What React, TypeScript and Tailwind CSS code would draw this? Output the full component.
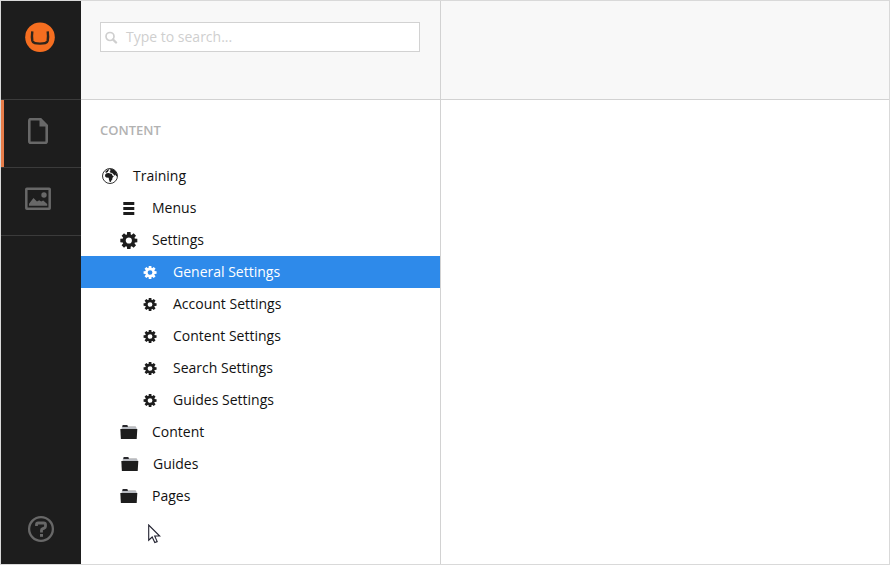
import React from "react";

type IconKind = "globe" | "menu" | "gear" | "gearSmall" | "folder";

function Gear({ size, viewBox }: { size: number; viewBox: string }) {
  return (
    <svg width={size} height={size} viewBox={viewBox} fill="currentColor" className="overflow-visible">
      {[0, 45, 90, 135].map((a) => (
        <path key={a} d="M6.400 0h3.200l.4 4H6zM6.400 16h3.200l.4-4H6z" transform={`rotate(${a} 8 8)`} />
      ))}
      <circle cx="8" cy="8" r="4.400" fill="none" stroke="currentColor" strokeWidth="3" />
    </svg>
  );
}

function Globe() {
  return (
    <svg width="16" height="16" viewBox="0 0 16 16" fill="currentColor">
      <circle cx="8" cy="8" r="7.500" fill="none" stroke="currentColor" strokeWidth=".9" />
      <path d="M3.200 6.600 4.600 5.300 7 5l.8.6 1.900.2.900 1.900 1.300.3-1.500 1.900-.1 1.600-1 1.100-.6 1.300-.9.100L7 11.800 6.700 9.700 4.200 9.500 3 8.200z" />
      <path d="M3.500 3.500 5.600 1.700l1.700-.6-.3 1.200L6 2.900l.2.900-1.900 1-.9-.3zM8 1.200l2-.3 2.300 1 1.600 1.700 1.200 3-.2 1.900-.9-.4-.6-1.700-.9 1.400L11.200 6 10 5 8.200 4.600 7.500 3.800l1-.7z" />
    </svg>
  );
}

function Folder() {
  return (
    <svg width="17" height="15" viewBox="0 0 17 15" className="overflow-visible">
      <g transform="translate(.3 0)">
        <path d="M2 2V.7L2.600 0H6.800L7.500.8V1.700H15.500L16 4H1.500z" fill="#28282c" />
        <path d="M1.500 2h14.500v2H1.500z" fill="#b8bbc1" />
        <path d="M0 4H17L16.400 14H.6z" fill="#1d1d1d" />
      </g>
    </svg>
  );
}

function NodeIcon({ kind }: { kind: IconKind }) {
  if (kind === "globe") return <Globe />;
  if (kind === "gear") return <Gear size={17} viewBox="-.3 0 16 16" />;
  if (kind === "gearSmall") return <Gear size={13} viewBox="-.7 0 16 16" />;
  if (kind === "folder") return <Folder />;
  return (
    <svg width="11" height="13" viewBox="-.3 0 11 13" fill="currentColor" className="overflow-visible">
      <path d="M0 0h11v3H0zM0 5h11v3H0zM0 10h11v3H0z" />
    </svg>
  );
}

const nodes: { label: string; icon: IconKind; pad: string; active?: boolean }[] = [
  { label: "Training", icon: "globe", pad: "pl-5" },
  { label: "Menus", icon: "menu", pad: "pl-[39px]" },
  { label: "Settings", icon: "gear", pad: "pl-[39px]" },
  { label: "General Settings", icon: "gearSmall", pad: "pl-[60px]", active: true },
  { label: "Account Settings", icon: "gearSmall", pad: "pl-[60px]" },
  { label: "Content Settings", icon: "gearSmall", pad: "pl-[60px]" },
  { label: "Search Settings", icon: "gearSmall", pad: "pl-[60px]" },
  { label: "Guides Settings", icon: "gearSmall", pad: "pl-[60px]" },
  { label: "Content", icon: "folder", pad: "pl-[39px]" },
  { label: "Guides", icon: "folder", pad: "pl-10" },
  { label: "Pages", icon: "folder", pad: "pl-[39px]" },
];

export default function App() {
  return (
    <div className="relative flex h-[565px] w-[890px] overflow-hidden border border-[#d9d9d9] bg-white font-['Open_Sans',sans-serif] text-sm text-[#1d1d1d]">
      <nav className="flex w-20 shrink-0 flex-col bg-[#1d1d1d] text-[#686868]">
        <div className="flex h-[99px] justify-center border-b border-[#3b3b3b] pt-[21px]">
          <svg width="30" height="30" viewBox="0 0 30 30" className="-ml-0.5">
            <circle cx="15" cy="15.200" r="14.800" fill="#f56e20" />
            <path d="M7.300 9.300C6.800 13 6.800 16.200 7.300 18.700 8 21.500 10.500 21.600 15 21.600s7-.1 7.700-2.900c.5-2.500.5-5.700 0-9.400" fill="none" stroke="#31251b" strokeWidth="2.400" />
          </svg>
        </div>
        <div className="flex h-[68px] border-b border-[#3b3b3b]">
          <div className="w-[3px] bg-[#e77d4a]" />
          <svg width="20" height="26" viewBox="0 0 20 26" className="mt-[18px] ml-6">
            <path d="M2.500 1.200H12.500L18.700 7.500V23.200Q18.700 24.700 17.200 24.700H2.800Q1.300 24.700 1.300 23.200V2.700Q1.300 1.200 2.500 1.200z" fill="none" stroke="currentColor" strokeWidth="2.600" />
            <path d="M11.500 1v7.500H19z" fill="currentColor" />
          </svg>
        </div>
        <div className="flex h-[68px] border-b border-[#3b3b3b] pt-[19px] pl-6">
          <svg width="26" height="23" viewBox="0 0 26 23" fill="currentColor">
            <rect x="1.300" y="1.700" width="23.400" height="20" rx=".5" fill="none" stroke="currentColor" strokeWidth="2.500" />
            <circle cx="19" cy="8" r="2.700" />
            <path d="M4 18.700V16.800L8.500 11 12 14.500l2.200-1.300 2 1.200 2-.8 4 3.400v1.700z" />
          </svg>
        </div>
        <svg width="28" height="28" viewBox="0 0 28 28" className="mt-auto mb-[21px] ml-[25.500px]">
          <circle cx="14" cy="14" r="11.900" fill="none" stroke="currentColor" strokeWidth="2.300" />
          <path d="M9.500 11V9.700Q9.500 8 11.200 8h5.500q1.800 0 1.800 1.800v1.500q0 1.300-1.300 1.800l-1.800.8q-.9.400-.9 1.400V17.500" fill="none" stroke="currentColor" strokeWidth="2.800" />
          <path d="M13 19h3v2.800h-3z" fill="currentColor" />
        </svg>
      </nav>

      <aside className="flex w-[360px] shrink-0 flex-col border-r border-[#d2d2d2]">
        <div className="h-[99px] border-b border-[#d2d2d2] bg-[#f8f8f8] pt-[21px] pl-[19px]">
          <div className="flex h-[30px] w-80 items-center border border-[#d2d2d2] bg-white pl-1 text-[#cfcfcf]">
            <svg width="13" height="13" viewBox="0 0 13 13" fill="none" stroke="currentColor">
              <circle cx="5" cy="5.500" r="4" strokeWidth="1.700" />
              <path d="m8 8.500 3 3" strokeWidth="2.400" strokeLinecap="round" />
            </svg>
            <span className="ml-2">Type to search...</span>
          </div>
        </div>
        <h2 className="mt-5 ml-[19px] h-5 text-[13px] leading-5 font-semibold text-[#b2b2b2]">CONTENT</h2>
        <ul className="mt-5">
          {nodes.map((n) => (
            <li key={n.label} className={`flex h-8 items-center ${n.pad} ${n.active ? "bg-[#2e8aea] text-white" : ""}`}>
              <span className={`flex shrink-0 ${n.icon === "globe" ? "w-[18px]" : "w-[17px]"} justify-center`}>
                <NodeIcon kind={n.icon} />
              </span>
              <span className={`${n.icon === "globe" ? "ml-3.5" : "ml-[15px]"} whitespace-nowrap ${n.active ? "" : "text-[#111111]"}`}>{n.label}</span>
            </li>
          ))}
        </ul>
      </aside>

      <main className="grow">
        <div className="h-[99px] border-b border-[#d2d2d2] bg-[#f8f8f8]" />
      </main>

      <svg width="13" height="20" viewBox="0 0 13 20" className="absolute top-[523px] left-[147px]">
        <path d="M.7 1v15.200L4.200 13l2.600 5.600 2.400-1L6.700 12h5z" fill="#fff" stroke="#222230" strokeWidth="1.100" />
      </svg>
    </div>
  );
}
